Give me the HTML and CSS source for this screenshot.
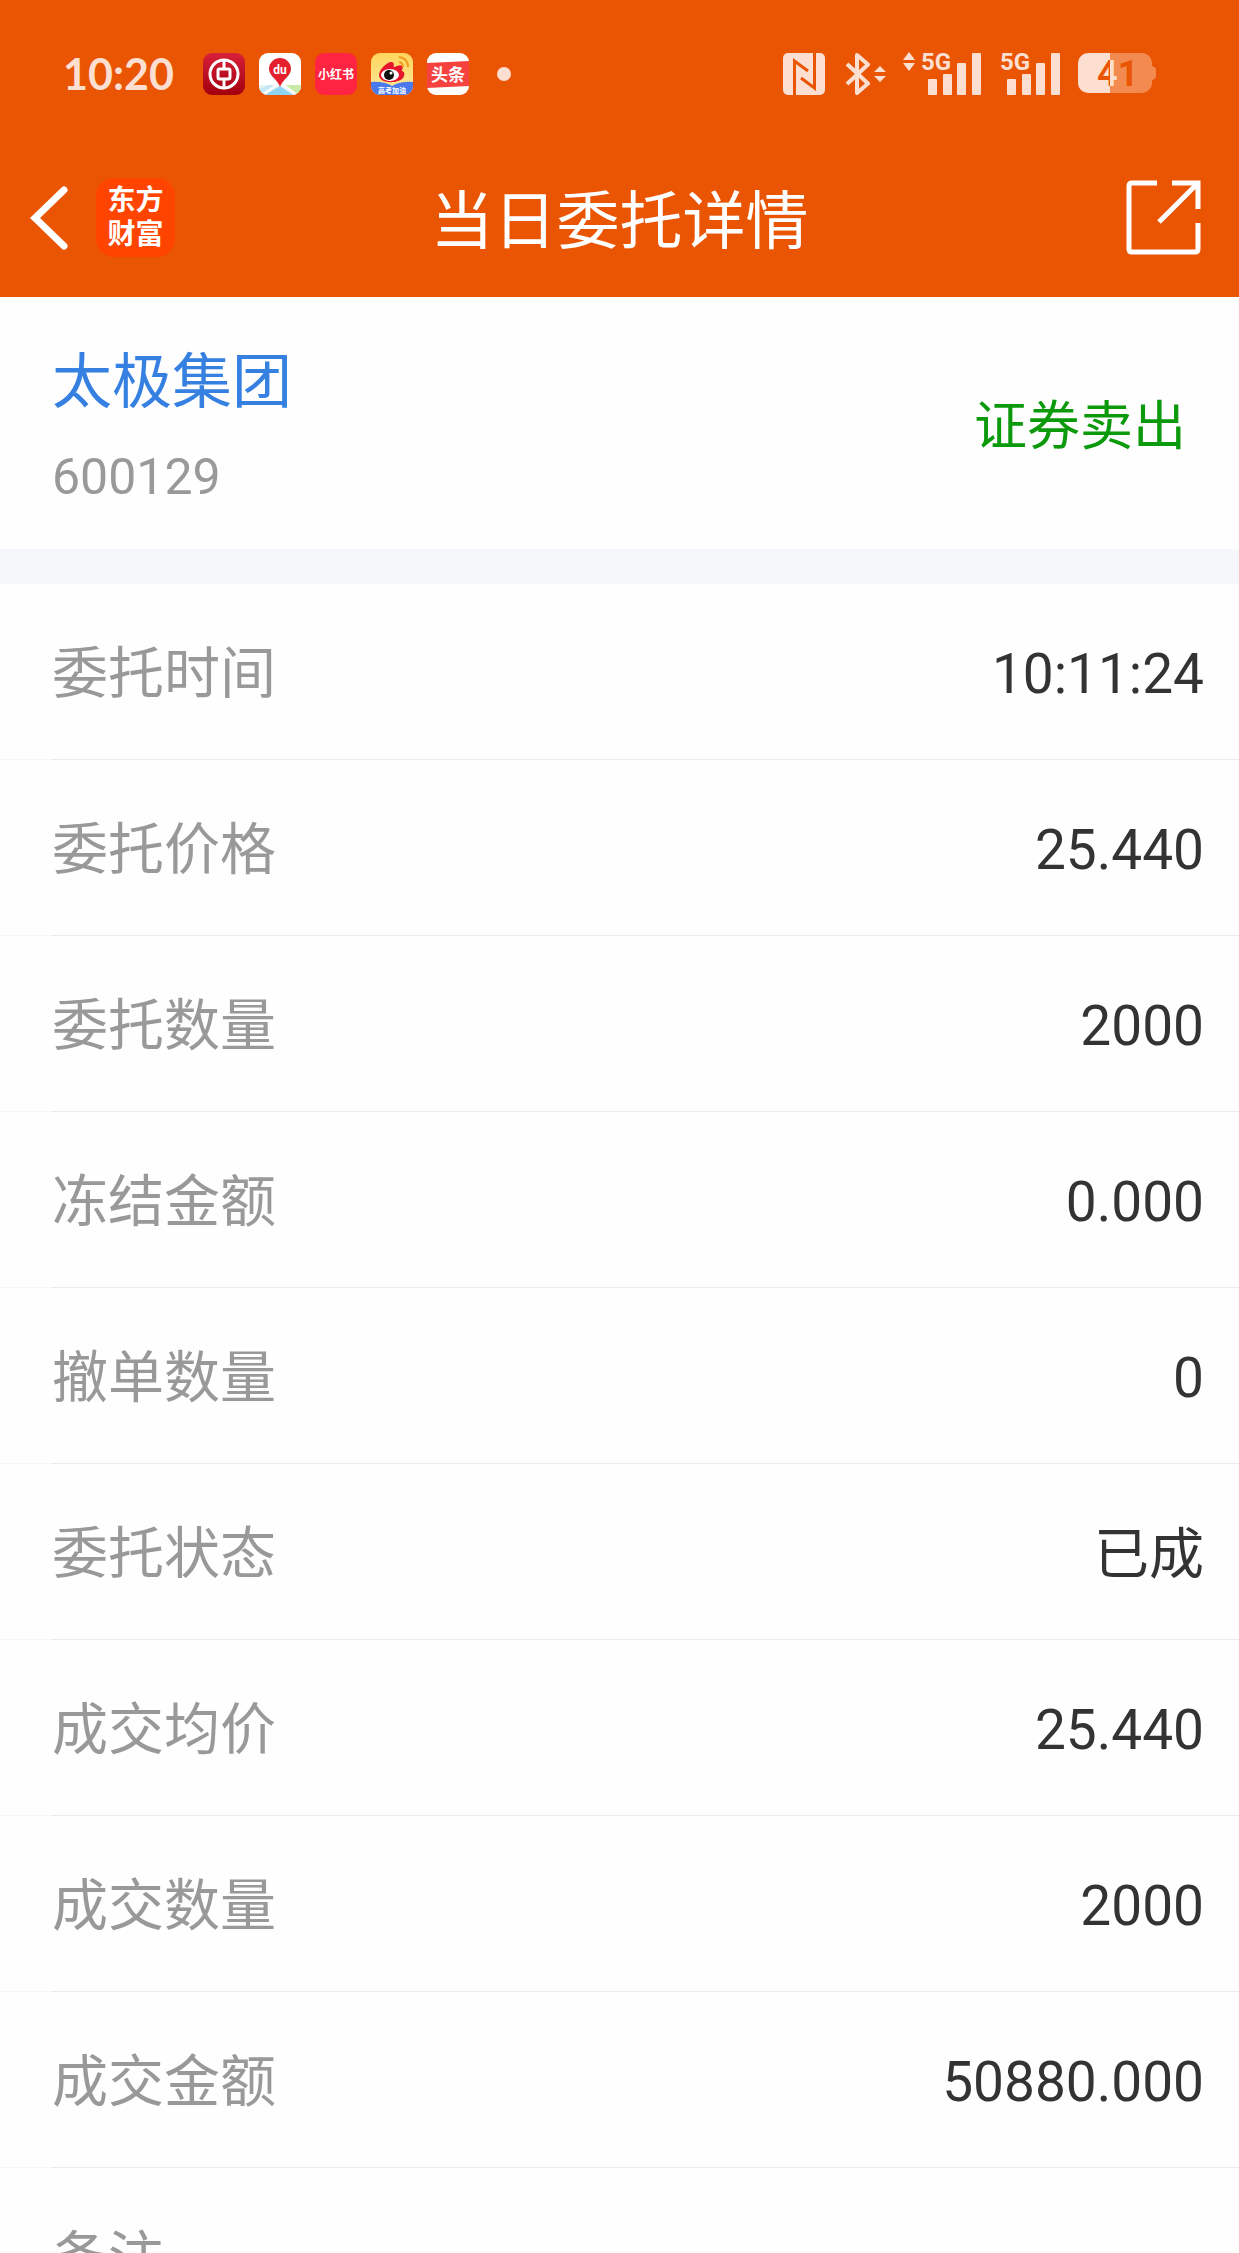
FILE: index.html
```html
<!DOCTYPE html>
<html lang="zh-CN">

<head>
  <meta charset="UTF-8">
  <meta name="viewport" content="width=device-width, initial-scale=1.0">
  <title>当日委托详情</title>
  <link rel="stylesheet" href="styles.css">
</head>

<body>
  <div class="app">

    <!-- Status bar -->
    <div class="status-bar">
      <span class="clock">10:20</span>

      <div class="app-icons">
        <svg width="42" height="42" viewBox="0 0 42 42" aria-hidden="true">
          <defs>
            <linearGradient id="boc" x1="0" y1="0" x2="0" y2="1">
              <stop offset="0" stop-color="#d8203a" />
              <stop offset="1" stop-color="#a3000f" />
            </linearGradient>
          </defs>
          <rect width="42" height="42" rx="9" fill="url(#boc)" />
          <g fill="none" stroke="#fff" stroke-width="3">
            <circle cx="21" cy="21" r="14" />
            <rect x="15" y="16" width="12" height="10" rx="1.5" />
            <path d="M21 7v9M21 26v9" />
          </g>
        </svg>

        <svg width="42" height="42" viewBox="0 0 42 42" aria-hidden="true">
          <defs>
            <clipPath id="tile">
              <rect width="42" height="42" rx="9" />
            </clipPath>
          </defs>
          <g clip-path="url(#tile)">
            <rect width="42" height="42" fill="#fff" />
            <path d="M0 32h14l7 3 7-3h14v10H0z" fill="#e6f3f2" />
            <path d="M21 33l13 9H6z" fill="#8fd4f4" />
            <path d="M0 36l10-4h6L3 42H0z" fill="#c3e7f5" />
            <path d="M25 32h17v10h-5z" fill="#c9e9a9" />
            <path d="M17 32L3 42M25 32l13 10" stroke="#fff" stroke-width="2" />
            <path d="M21 34c-2-7-11-11-11-18a11 11 0 0 1 22 0c0 7-9 11-11 18z" fill="#e3202c" />
          </g>
          <text x="21" y="21" class="icon-text" font-size="12" fill="#fff">du</text>
        </svg>

        <svg width="42" height="42" viewBox="0 0 42 42" aria-hidden="true">
          <rect width="42" height="42" rx="9" fill="#ff2442" />
          <text x="21" y="26" class="icon-text" font-size="12" fill="#fff">小红书</text>
        </svg>

        <svg width="42" height="42" viewBox="0 0 42 42" aria-hidden="true">
          <defs>
            <linearGradient id="weibo" x1="0" y1="0" x2="0" y2="1">
              <stop offset="0" stop-color="#ffd65c" />
              <stop offset="1" stop-color="#ffe9a0" />
            </linearGradient>
          </defs>
          <g clip-path="url(#tile)">
            <rect width="42" height="42" fill="url(#weibo)" />
            <path d="M0 29q12-1 21 4q9-5 21-4v13H0z" fill="#4a78ee" />
            <path d="M8 22c0-6 9-14 13-13 3 1 1 4 2 5 2 0 6-3 8-1 2 3-1 4 0 5 3 1 3 4 1 7-5 6-24 6-24-3z" fill="#e6162d" />
            <ellipse cx="19" cy="22" rx="9" ry="6" fill="#fff" />
            <circle cx="18" cy="22" r="5" fill="#111" />
            <circle cx="20" cy="20" r="1.5" fill="#fff" />
            <path d="M28 4q9 1 9 10M28 9q4 1 4 5" fill="none" stroke="#f29c1f" stroke-width="2" />
          </g>
          <text x="21" y="40" class="icon-text" font-size="7" fill="#fff">高考加油</text>
        </svg>

        <svg width="42" height="42" viewBox="0 0 42 42" aria-hidden="true">
          <rect width="42" height="42" rx="9" fill="#fff" />
          <path d="M0 10l42-2v25L0 35z" fill="#f6423f" />
          <text x="21" y="28" class="icon-text" font-size="17" fill="#fff">头条</text>
        </svg>
      </div>

      <span class="more-dot"></span>

      <div class="system-icons">
        <!-- NFC -->
        <svg width="42" height="42" viewBox="0 0 42 42" aria-hidden="true">
          <rect width="42" height="42" rx="5" fill="#fcdfd0" />
          <path d="M11.500 42V8L25 18M31.500 0V35L18 25" fill="none" stroke="#ea5504" stroke-width="3" />
        </svg>

        <!-- Bluetooth -->
        <svg class="bluetooth" width="42" height="42" viewBox="0 0 42 42" aria-hidden="true">
          <path d="M2 11L23 30.500 12 40V2l11 9.500L2 31" fill="none" stroke="#fcdfd0" stroke-width="4" stroke-linejoin="round" />
          <path d="M29 19l6-6 6 6zM29 23l6 6 6-6z" fill="#fcdfd0" />
        </svg>

        <!-- Signal, SIM 1 -->
        <svg class="signal" width="78" height="52" viewBox="0 -3 78 52" aria-hidden="true">
          <g fill="#fcdfd0">
            <path d="M0 9l6-8 6 8zM0 12l6 8 6-8z" />
            <text x="18" y="19" class="network">5G</text>
            <rect x="25" y="28" width="9" height="16" rx="1" />
            <rect x="40" y="23" width="9" height="21" rx="1" />
            <rect x="54" y="12" width="9" height="32" rx="1" />
            <rect x="69" y="2" width="9" height="42" rx="1" />
          </g>
        </svg>

        <!-- Signal, SIM 2 -->
        <svg class="signal" width="61" height="52" viewBox="0 -3 61 52" aria-hidden="true">
          <g fill="#fcdfd0">
            <text x="1" y="19" class="network">5G</text>
            <rect x="8" y="28" width="9" height="16" rx="1" />
            <rect x="23" y="23" width="9" height="21" rx="1" />
            <rect x="37" y="12" width="9" height="32" rx="1" />
            <rect x="52" y="2" width="9" height="42" rx="1" />
          </g>
        </svg>

        <!-- Battery -->
        <svg width="78" height="48" viewBox="0 -3 78 48" aria-hidden="true">
          <defs>
            <linearGradient id="level" gradientUnits="userSpaceOnUse" x1="0" y1="0" x2="64" y2="0">
              <stop offset="0.5" stop-color="#fcdfd0" />
              <stop offset="0.5" stop-color="#f38a50" />
            </linearGradient>
            <linearGradient id="digit" gradientUnits="userSpaceOnUse" x1="0" y1="0" x2="64" y2="0">
              <stop offset="0.5" stop-color="#ea5504" />
              <stop offset="0.5" stop-color="#fcdfd0" />
            </linearGradient>
          </defs>
          <rect width="74" height="40" rx="10" fill="url(#level)" />
          <path d="M74 13q4 1 4 4v6q0 3-4 4z" fill="#f38a50" />
          <text x="19" y="33" class="charge" fill="#ea5504"><tspan fill="url(#digit)">4</tspan>1</text>
        </svg>
      </div>
    </div>

    <!-- Navigation -->
    <header class="nav">
      <div class="nav-left">
        <button type="button" class="icon-btn" aria-label="返回">
          <svg width="38" height="64" viewBox="0 0 38 64">
            <path d="M34 4L5 32l29 28" fill="none" stroke="#fff" stroke-width="7" stroke-linecap="round" />
          </svg>
        </button>
        <a href="#" class="brand">东方<br>财富</a>
      </div>
      <h1>当日委托详情</h1>
      <button type="button" class="icon-btn share" aria-label="分享">
        <svg width="75" height="75" viewBox="0 0 75 75">
          <path d="M31 3H6Q3 3 3 6V69Q3 72 6 72H69Q72 72 72 69V43M46 3H72V29M72 3L33 42" fill="none" stroke="#fff" stroke-width="5" />
        </svg>
      </button>
    </header>

    <!-- Stock summary -->
    <section class="summary">
      <div>
        <h2><a href="#">太极集团</a></h2>
        <p class="code">600129</p>
      </div>
      <p class="side">证券卖出</p>
    </section>

    <!-- Order details -->
    <dl class="details">
      <div class="row"><dt>委托时间</dt><dd>10:11:24</dd></div>
      <div class="row"><dt>委托价格</dt><dd>25.440</dd></div>
      <div class="row"><dt>委托数量</dt><dd>2000</dd></div>
      <div class="row"><dt>冻结金额</dt><dd>0.000</dd></div>
      <div class="row"><dt>撤单数量</dt><dd>0</dd></div>
      <div class="row"><dt>委托状态</dt><dd>已成</dd></div>
      <div class="row"><dt>成交均价</dt><dd>25.440</dd></div>
      <div class="row"><dt>成交数量</dt><dd>2000</dd></div>
      <div class="row"><dt>成交金额</dt><dd>50880.000</dd></div>
      <div class="row"><dt>备注</dt><dd></dd></div>
    </dl>

  </div>
</body>

</html>
```
FILE: styles.css
```css
* {
  box-sizing: border-box;
}

body {
  margin: 0;
  font-family: Roboto, "Noto Sans CJK SC", sans-serif;
  background: #fefefe;
  color: #333;
}

h1,
h2,
p,
dl,
dd {
  margin: 0;
  font-weight: 400;
}

a {
  color: inherit;
  text-decoration: none;
}

svg {
  display: block;
}

.app {
  display: flex;
  flex-direction: column;
  height: 100vh;
}

/* Status bar */
.status-bar {
  flex: none;
  display: flex;
  align-items: center;
  height: 148px;
  padding: 0 83px 0 63px;
  background: #ea5504;
}

.clock {
  width: 140px;
  font-family: Lato, sans-serif;
  font-size: 43px;
  font-weight: 700;
  line-height: 48px;
  color: #fcdfd0;
}

.app-icons {
  display: flex;
  gap: 14px;
}

.icon-text {
  font-family: Roboto, "Noto Sans CJK SC", sans-serif;
  font-weight: 700;
  text-anchor: middle;
}

.more-dot {
  width: 14px;
  height: 14px;
  margin-left: 28px;
  border-radius: 50%;
  background: #fcdfd0;
}

.system-icons {
  display: flex;
  align-items: center;
  gap: 20px;
  margin-left: auto;
}

.bluetooth {
  margin-right: -4px;
}

.signal {
  margin-right: -2px;
}

.network {
  font-size: 24px;
  font-weight: 700;
}

.charge {
  font-size: 36px;
  font-weight: 700;
}

/* Navigation */
.nav {
  flex: none;
  display: grid;
  grid-template-columns: 1fr auto 1fr;
  align-items: center;
  height: 149px;
  padding: 0 30px 10px;
  background: #ea5504;
  color: #fff;
}

.nav-left {
  display: flex;
  align-items: center;
  gap: 28px;
}

.icon-btn {
  padding: 0;
  border: none;
  background: none;
  cursor: pointer;
}

.share {
  justify-self: end;
  margin-right: 8px;
}

.brand {
  width: 79px;
  height: 79px;
  padding-top: 6px;
  border-radius: 18px;
  background: #ff4400;
  font-size: 28px;
  font-weight: 700;
  line-height: 34px;
  text-align: center;
}

.nav h1 {
  padding-top: 8px;
  font-size: 63px;
  line-height: 80px;
}

/* Stock summary */
.summary {
  flex: none;
  display: flex;
  align-items: center;
  justify-content: space-between;
  height: 252px;
  padding: 14px 53px 0 52px;
}

.summary h2 {
  font-size: 60px;
  line-height: 94px;
  color: #3580e0;
}

.code {
  font-size: 50px;
  line-height: 94px;
  color: #999;
}

.side {
  padding-bottom: 6px;
  font-size: 53px;
  line-height: 80px;
  color: #0c9a0c;
}

/* Order details */
.details {
  flex: 1;
  min-height: 0;
  overflow-y: auto;
  scrollbar-width: none;
  border-top: 35px solid #f6f7fa;
}

.row {
  display: flex;
  align-items: center;
  justify-content: space-between;
  height: 176px;
  padding: 4px 35px 0 52px;
  font-size: 55px;
  line-height: 80px;
  /* separator is lighter under the left padding */
  background: linear-gradient(to right, #f7f7f7 52px, #ebebeb 52px) bottom / 100% 1px no-repeat;
}

.row dt {
  font-size: 56px;
  color: #999;
}
```
